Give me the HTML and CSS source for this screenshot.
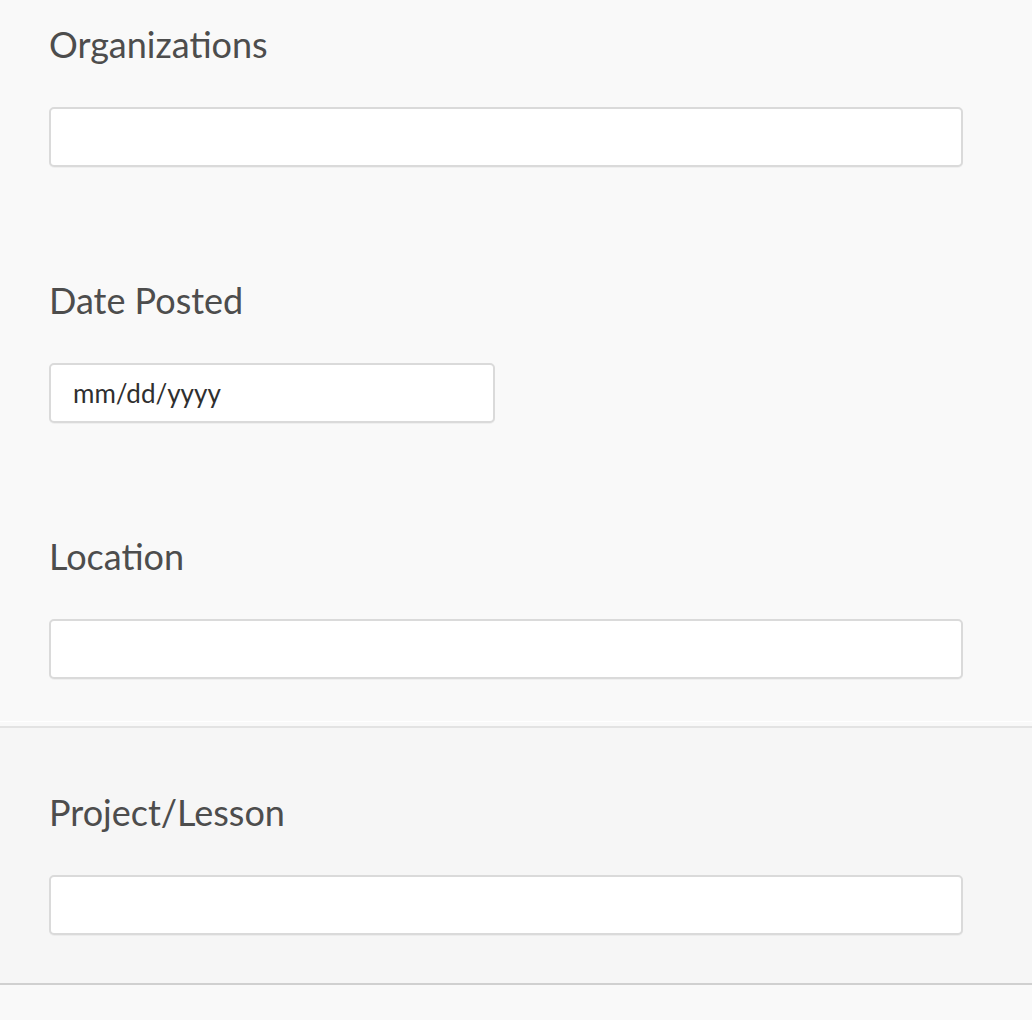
FILE: index.html
```html
<!DOCTYPE html>
<html lang="en">
<head>
<meta charset="utf-8">
<title>Filters</title>
<link rel="stylesheet" href="styles.css">
</head>
<body>
  <section class="group group-main">
    <div class="field">
      <label class="field-label" for="org">Organizations</label>
      <input class="field-input" id="org" type="text">
    </div>
    <div class="field">
      <label class="field-label" for="date">Date Posted</label>
      <div class="field-input field-date" id="date">mm/dd/yyyy</div>
    </div>
    <div class="field field-last">
      <label class="field-label" for="loc">Location</label>
      <input class="field-input" id="loc" type="text">
    </div>
  </section>
  <section class="group group-alt">
    <div class="field field-last">
      <label class="field-label" for="proj">Project/Lesson</label>
      <input class="field-input" id="proj" type="text">
    </div>
  </section>
</body>
</html>
```
FILE: styles.css
```css
html, body {
  margin: 0;
  padding: 0;
  background: #f9f9f9;
  font-family: Lato, "Open Sans", "Liberation Sans", sans-serif;
}

.group {
  padding: 22px 69px 47px 49px;
}

.group-main {
  border-bottom: 1px solid #ffffff;
  padding-bottom: 42px;
  margin-bottom: 4px;
}

.group-alt {
  background: #f6f6f6;
  border-top: 2px solid #e3e3e3;
  padding-top: 62px;
  padding-bottom: 48px;
  border-bottom: 2px solid #d0d0d0;
  box-shadow: 0 2px 3px rgba(0, 0, 0, 0.05);
}

.field {
  display: flex;
  flex-direction: column;
  align-items: flex-start;
  margin-bottom: 111px;
}

.field-last {
  margin-bottom: 0;
}

.field-label {
  font-size: 36px;
  line-height: 44px;
  color: #4d4d4d;
  margin-bottom: 41px;
}

.field-input {
  box-sizing: border-box;
  width: 914px;
  height: 60px;
  margin: 0;
  background: #ffffff;
  border: 2px solid #dadada;
  border-radius: 5px;
  box-shadow: 0 1px 0 rgba(0, 0, 0, 0.04);
  font-family: Lato, "Open Sans", "Liberation Sans", sans-serif;
  font-size: 26px;
  color: #333333;
  outline: none;
}

.field-date {
  width: 446px;
  display: flex;
  align-items: center;
  padding-left: 22px;
  color: #2f2f2f;
}
```
